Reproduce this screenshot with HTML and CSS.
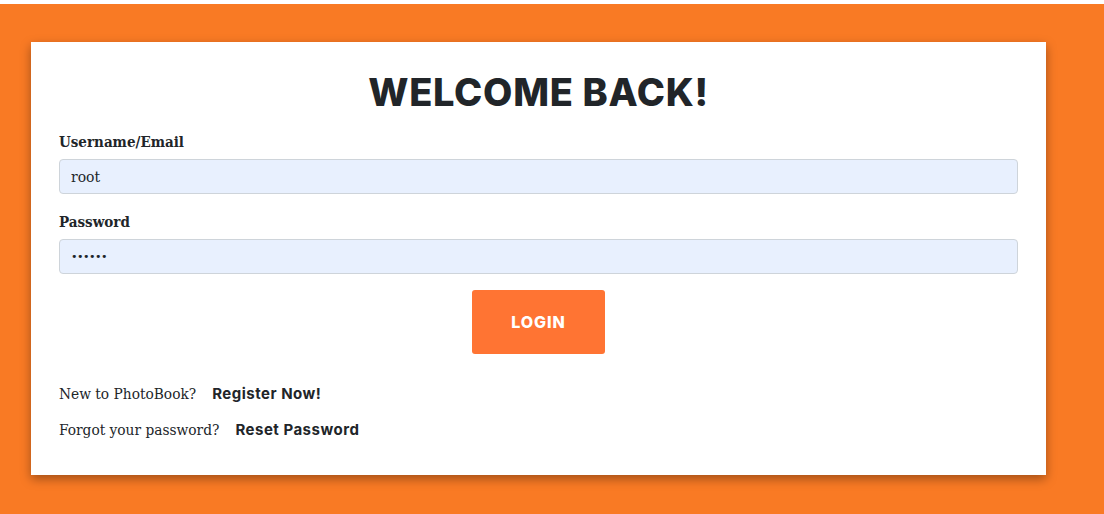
FILE: index.html
```html
<!DOCTYPE html>
<html lang="en">
<head>
<meta charset="utf-8">
<title>Login - PhotoBook</title>
<link rel="stylesheet" href="styles.css">
</head>
<body>
<div class="strip"></div>
<main class="page">
  <section class="card">
    <h1 class="title">WELCOME BACK!</h1>
    <form class="form">
      <div class="field">
        <label class="label" for="user">Username/Email</label>
        <input class="input" id="user" type="text" value="root">
      </div>
      <div class="field">
        <label class="label" for="pass">Password</label>
        <input class="input input-pass" id="pass" type="password" value="secret">
      </div>
      <div class="actions">
        <button class="btn" type="button">LOGIN</button>
      </div>
    </form>
    <p class="line"><span class="muted">New to PhotoBook?</span><a class="link" href="#">Register Now!</a></p>
    <p class="line"><span class="muted">Forgot your password?</span><a class="link" href="#">Reset Password</a></p>
  </section>
</main>
</body>
</html>
```
FILE: styles.css
```css
html, body {
  margin: 0;
  padding: 0;
  background: #ffffff;
}
body {
  font-family: "DejaVu Serif", "Liberation Serif", serif;
  color: #212529;
}
.strip {
  height: 4px;
  background: #ffffff;
}
.page {
  background: #f97a24;
  padding: 38px 58px 39px 31px;
  min-height: 433px;
}
.card {
  background: #ffffff;
  box-shadow: 0 4px 10px rgba(0, 0, 0, 0.35);
  padding: 27px 28px 27px;
}
.title {
  margin: 0 0 17px;
  text-align: center;
  font-family: "Inter", "Open Sans", sans-serif;
  font-weight: 800;
  font-size: 38px;
  line-height: 46px;
  letter-spacing: 0.7px;
  color: #212529;
}
.form {
  margin: 0;
}
.field {
  margin-bottom: 18px;
}
.label {
  display: block;
  font-family: "DejaVu Serif Condensed", "DejaVu Serif", serif;
  font-weight: bold;
  font-size: 15px;
  line-height: 20px;
  margin-bottom: 7px;
}
.input {
  display: block;
  box-sizing: border-box;
  width: 100%;
  height: 35px;
  padding: 0 11px;
  border: 1px solid #ced4da;
  border-radius: 4px;
  background: #e8f0fe;
  font-family: "DejaVu Serif Condensed", "DejaVu Serif", serif;
  font-size: 15.5px;
  color: #212529;
  outline: none;
}
.input-pass {
  font-family: "DejaVu Sans", sans-serif;
  font-size: 11px;
  letter-spacing: -0.5px;
}
.actions {
  display: flex;
  justify-content: center;
  margin-top: -2px;
}
.btn {
  width: 133px;
  height: 64px;
  border: none;
  border-radius: 3px;
  background: #ff7433;
  color: #ffffff;
  font-family: "Inter", "Open Sans", sans-serif;
  font-weight: 800;
  font-size: 16px;
  letter-spacing: 0.9px;
  cursor: pointer;
}
.line {
  margin: 0;
  display: flex;
  align-items: baseline;
  gap: 16px;
  line-height: 35px;
}
.line:first-of-type {
  margin-top: 22px;
}
.muted {
  font-family: "DejaVu Serif Condensed", "DejaVu Serif", serif;
  font-weight: 300;
  font-size: 15.3px;
  color: #212529;
}
.link {
  font-family: "Inter", "Open Sans", sans-serif;
  font-weight: 700;
  font-size: 15px;
  letter-spacing: 0.5px;
  color: #212529;
  text-decoration: none;
}
```
